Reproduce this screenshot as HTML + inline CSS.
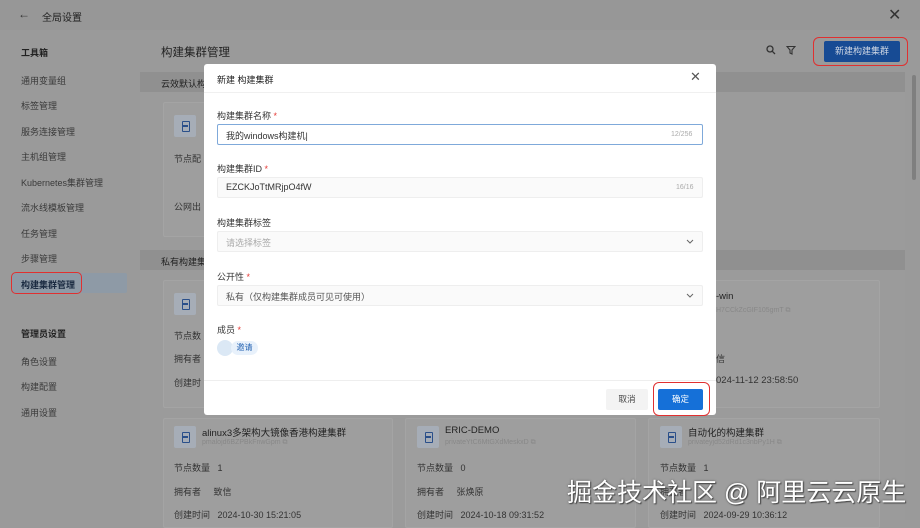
<!DOCTYPE html>
<html><head><meta charset="utf-8"><style>
*{margin:0;padding:0;box-sizing:border-box}
body{width:920px;height:520px;overflow:hidden;background:#9a9a9a;font-family:"Liberation Sans","Noto Sans CJK SC",sans-serif;color:#262626;position:relative;font-size:9px}
.a{position:absolute;white-space:nowrap}
.side{color:#3a3a3a;font-size:9px}
.card{position:absolute;background:#9e9e9e;border:1px solid #a4a4a4;border-radius:2px}
.ic{position:absolute;width:22px;height:22px;background:#a6adb7;border-radius:2px}
.ic:after{content:"";position:absolute;left:8px;top:6px;width:6px;height:9px;border:1.5px solid #2a4f8a;border-radius:1px}
.ic:before{content:"";position:absolute;left:8px;top:10px;width:6px;height:1.5px;background:#2a4f8a}
.lbl{color:#333;font-size:9px}
.m{position:absolute;left:204px;top:64px;width:512px;height:351px;background:#fff;border-radius:3px}
.inp{position:absolute;left:13px;width:486px;height:21px;border:1px solid #eee;border-radius:2px;background:#fafafa}
.ml{position:absolute;left:13px;font-size:9px;color:#333}
.req{color:#e53935}
</style></head><body>
<div class="a" style="left:0;top:0;width:920px;height:30px;background:#979797"></div>
<div class="a" style="left:18px;top:7px;font-size:12px;color:#333">←</div>
<div class="a" style="left:42px;top:9px;font-size:10px;color:#222">全局设置</div>
<div class="a" style="left:888px;top:5px;font-size:16px;color:#333">✕</div>

<div class="a side" style="left:21px;top:46px;font-weight:bold;color:#222">工具箱</div>
<div class="a side" style="left:21px;top:74px">通用变量组</div>
<div class="a side" style="left:21px;top:99px">标签管理</div>
<div class="a side" style="left:21px;top:125px">服务连接管理</div>
<div class="a side" style="left:21px;top:150px">主机组管理</div>
<div class="a side" style="left:21px;top:176px">Kubernetes集群管理</div>
<div class="a side" style="left:21px;top:201px">流水线模板管理</div>
<div class="a side" style="left:21px;top:227px">任务管理</div>
<div class="a side" style="left:21px;top:252px">步骤管理</div>
<div class="a" style="left:12px;top:273px;width:115px;height:20px;background:#8e9aa6;border-radius:2px"></div>
<div class="a" style="left:11px;top:272px;width:71px;height:22px;border:1.5px solid #e03030;border-radius:5px"></div>
<div class="a side" style="left:21px;top:278px;font-weight:bold;color:#1a2a40">构建集群管理</div>
<div class="a side" style="left:21px;top:327px;font-weight:bold;color:#222">管理员设置</div>
<div class="a side" style="left:21px;top:355px">角色设置</div>
<div class="a side" style="left:21px;top:380px">构建配置</div>
<div class="a side" style="left:21px;top:406px">通用设置</div>

<div class="a" style="left:161px;top:44px;font-size:11.5px;color:#222">构建集群管理</div>
<svg class="a" style="left:766px;top:45px" width="10" height="10" viewBox="0 0 10 10"><circle cx="4" cy="4" r="3" fill="none" stroke="#333" stroke-width="1.3"/><line x1="6.2" y1="6.2" x2="9" y2="9" stroke="#333" stroke-width="1.3"/></svg>
<svg class="a" style="left:786px;top:45px" width="10" height="10" viewBox="0 0 10 10"><path d="M1 1.5H9L6 5V9L4 8V5Z" fill="none" stroke="#333" stroke-width="1.1"/></svg>
<div class="a" style="left:813px;top:37px;width:95px;height:29px;border:1.5px solid #e03030;border-radius:6px"></div>
<div class="a" style="left:824px;top:41px;width:76px;height:21px;background:#174b94;border-radius:2px;color:#cfd7e4;font-size:9px;text-align:center;line-height:21px">新建构建集群</div>

<div class="a" style="left:140px;top:72px;width:765px;height:20px;background:#909090"></div>
<div class="a" style="left:161px;top:77px;font-size:9px;color:#222">云效默认构</div>
<div class="a" style="left:140px;top:92px;width:765px;height:158px;background:#9b9b9b"></div>
<div class="card" style="left:163px;top:102px;width:230px;height:135px"></div>
<div class="ic" style="left:174px;top:115px"></div>
<div class="a lbl" style="left:174px;top:152px">节点配</div>
<div class="a lbl" style="left:174px;top:200px">公网出</div>
<div class="a" style="left:912px;top:75px;width:4px;height:105px;background:#7f7f7f;border-radius:2px"></div>

<div class="a" style="left:140px;top:250px;width:765px;height:20px;background:#909090"></div>
<div class="a" style="left:161px;top:255px;font-size:9px;color:#222">私有构建集</div>
<div class="a" style="left:140px;top:270px;width:765px;height:250px;background:#9b9b9b"></div>

<div class="card" style="left:163px;top:280px;width:230px;height:128px"></div>
<div class="ic" style="left:174px;top:293px"></div>
<div class="a lbl" style="left:174px;top:329px">节点数</div>
<div class="a lbl" style="left:174px;top:352px">拥有者</div>
<div class="a lbl" style="left:174px;top:376px">创建时</div>
<div class="card" style="left:648px;top:280px;width:232px;height:128px"></div>
<div class="a" style="left:716px;top:291px;font-size:9.5px;color:#222">-win</div>
<div class="a" style="left:716px;top:307px;font-size:7px;color:#888">H7CCkZcGIF105gmT ⧉</div>
<div class="a lbl" style="left:716px;top:352px">信</div>
<div class="a lbl" style="left:716px;top:375px;font-size:9.5px">024-11-12 23:58:50</div>

<div class="card" style="left:163px;top:418px;width:230px;height:110px"></div>
<div class="card" style="left:405px;top:418px;width:231px;height:110px"></div>
<div class="card" style="left:648px;top:418px;width:232px;height:110px"></div>
<div class="ic" style="left:174px;top:426px"></div>
<div class="a" style="left:202px;top:425px;font-size:9.5px;color:#222">alinux3多架构大镜像香港构建集群</div>
<div class="a" style="left:202px;top:439px;font-size:7px;color:#888">pmalojd6BZPBkFnwGpm ⧉</div>
<div class="a lbl" style="left:174px;top:461px">节点数量 &nbsp; 1</div>
<div class="a lbl" style="left:174px;top:485px">拥有者 &nbsp;&nbsp;&nbsp; 致信</div>
<div class="a lbl" style="left:174px;top:508px">创建时间 &nbsp; 2024-10-30 15:21:05</div>
<div class="ic" style="left:417px;top:426px"></div>
<div class="a" style="left:445px;top:425px;font-size:9.5px;color:#222">ERIC-DEMO</div>
<div class="a" style="left:445px;top:439px;font-size:7px;color:#888">privateYtC6MtGXdMeskxD ⧉</div>
<div class="a lbl" style="left:417px;top:461px">节点数量 &nbsp; 0</div>
<div class="a lbl" style="left:417px;top:485px">拥有者 &nbsp;&nbsp;&nbsp; 张焕原</div>
<div class="a lbl" style="left:417px;top:508px">创建时间 &nbsp; 2024-10-18 09:31:52</div>
<div class="ic" style="left:660px;top:426px"></div>
<div class="a" style="left:688px;top:425px;font-size:9.5px;color:#222">自动化的构建集群</div>
<div class="a" style="left:688px;top:439px;font-size:7px;color:#888">privateyjd52dRd1c3nbPy1H ⧉</div>
<div class="a lbl" style="left:660px;top:461px">节点数量 &nbsp; 1</div>
<div class="a lbl" style="left:660px;top:485px">拥有者</div>
<div class="a lbl" style="left:660px;top:508px">创建时间 &nbsp; 2024-09-29 10:36:12</div>

<div class="m">
<div class="a" style="left:13px;top:9px;font-size:9px;color:#222">新建 构建集群</div>
<div class="a" style="left:486px;top:5px;font-size:13px;color:#555">✕</div>
<div class="a" style="left:0;top:28px;width:512px;height:1px;background:#f0f0f0"></div>
<div class="ml" style="top:45px">构建集群名称 <span class="req">*</span></div>
<div class="inp" style="top:60px;border-color:#7fa9da;background:#fff"></div>
<div class="a" style="left:22px;top:65px;font-size:9px;color:#333">我的windows构建机|</div>
<div class="a" style="left:467px;top:67px;font-size:7px;color:#aaa">12/256</div>
<div class="ml" style="top:98px">构建集群ID <span class="req">*</span></div>
<div class="inp" style="top:113px"></div>
<div class="a" style="left:22px;top:118px;font-size:9px;color:#333">EZCKJoTtMRjpO4fW</div>
<div class="a" style="left:472px;top:120px;font-size:7px;color:#aaa">16/16</div>
<div class="ml" style="top:152px">构建集群标签</div>
<div class="inp" style="top:167px"></div>
<div class="a" style="left:22px;top:172px;font-size:9px;color:#aaa">请选择标签</div>
<svg class="a" style="left:482px;top:175px" width="8" height="5" viewBox="0 0 8 5"><path d="M1 1L4 4L7 1" fill="none" stroke="#666" stroke-width="1"/></svg>
<div class="ml" style="top:206px">公开性 <span class="req">*</span></div>
<div class="inp" style="top:221px"></div>
<div class="a" style="left:22px;top:226px;font-size:9px;color:#555">私有（仅构建集群成员可见可使用）</div>
<svg class="a" style="left:482px;top:229px" width="8" height="5" viewBox="0 0 8 5"><path d="M1 1L4 4L7 1" fill="none" stroke="#666" stroke-width="1"/></svg>
<div class="ml" style="top:259px">成员 <span class="req">*</span></div>
<div class="a" style="left:13px;top:276px;width:16px;height:16px;border-radius:50%;background:#dbe8f5"></div>
<div class="a" style="left:27px;top:277px;width:27px;height:14px;border-radius:7px;background:#e8f1fb;color:#2060b0;font-size:8px;text-align:center;line-height:14px">邀请</div>
<div class="a" style="left:0;top:316px;width:512px;height:1px;background:#eee"></div>
<div class="a" style="left:402px;top:325px;width:42px;height:21px;background:#f3f3f3;border-radius:2px;color:#444;font-size:8.5px;text-align:center;line-height:21px">取消</div>
<div class="a" style="left:449px;top:318px;width:57px;height:34px;border:1.5px solid #e03030;border-radius:6px"></div>
<div class="a" style="left:454px;top:325px;width:45px;height:21px;background:#1570d8;border-radius:2px;color:#fff;font-size:8.5px;text-align:center;line-height:21px">确定</div>
</div>

<div class="a" style="left:567px;top:473px;font-size:25px;color:#fff;text-shadow:0 0 2px #555,1px 1px 1px #444">掘金技术社区 @ 阿里云云原生</div>
</body></html>
